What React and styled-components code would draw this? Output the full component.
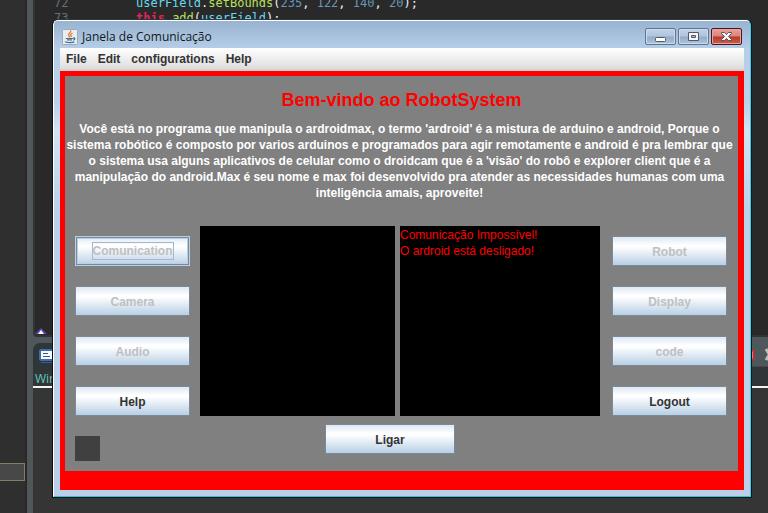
import React from "react";
import styled, { createGlobalStyle, css } from "styled-components";

const GlobalStyle = createGlobalStyle`
  *, *::before, *::after { box-sizing: border-box; }
  body { margin: 0; background: #353535; font-family: "Liberation Sans", Arial, sans-serif; }
  button { font: inherit; padding: 0; margin: 0; }
`;

const Desktop = styled.div`
  position: relative;
  display: flow-root;
  min-height: 100vh;
  overflow: hidden;
`;

/* ---------- editor behind the window ---------- */

const Ide = styled.div`
  position: absolute;
  inset: 0;
  display: flex;
  overflow: hidden;
`;

const Explorer = styled.aside`
  width: 27px;
  flex: none;
  padding-top: 463px;
  background: #2f2f2f;
  border-right: 2px solid #282828;
`;

const SelectedRow = styled.div`
  height: 18px;
  background: #484848;
  border: 1px solid #7f7f62;
  border-left: 0;
`;

const Sash = styled.div`
  width: 6px;
  flex: none;
  background: #50575b;
`;

const Workbench = styled.div`
  flex: 1;
  min-width: 0;
  display: flex;
  flex-direction: column;
  background: #50575b;
`;

const Editor = styled.div`
  height: 337px;
  flex: none;
  display: flex;
  flex-direction: column;
  justify-content: space-between;
  background: #292929;
  border-left: 2px solid #303437;
  border-bottom: 2px solid #303437;
  border-bottom-left-radius: 4px;
`;

const Code = styled.pre`
  margin: 0;
  margin-top: -4px;
  font: 12px/15px "DejaVu Sans Mono", monospace;
  color: #f0f0f0;
`;

const CodeLine = styled.div`
  white-space: pre;
`;

const LineNumber = styled.span`
  display: inline-block;
  width: 101px;
  padding-left: 19px;
  color: #64707a;
`;

const Token = styled.span`
  color: ${(p) => p.$color};
`;

const Marker = styled.svg`
  display: block;
  width: 12px;
  height: 7px;
`;

const ConsoleTabs = styled.div`
  height: 45px;
  flex: none;
  margin-top: 6px;
  display: flex;
  justify-content: space-between;
  background: #303538;
  border-top-left-radius: 7px;
  border-bottom: 2px solid #f4f4f4;
`;

const TabSide = styled.div`
  padding: 6px 0 0 2px;
`;

const TabIcon = styled.svg`
  display: block;
  width: 14px;
  height: 14px;
  margin-left: 4px;
`;

const ConsoleName = styled.div`
  font: 12px/16px "Open Sans", sans-serif;
  margin-top: 8px;
  color: #68c8bd;
`;

const ToolStrip = styled.div`
  width: 19px;
  height: 24px;
  background: #50575b;
  border-bottom: 1px solid #45484c;
`;

const ConsoleBody = styled.div`
  flex: 1;
  background: #353535;
`;

/* ---------- application window ---------- */

const Frame = styled.div`
  position: relative;
  margin: 19px 16px 15px 52px;
  border: 1px solid #101010;
  border-top-color: #30343a;
  border-radius: 6px 6px 0 0;
  background: #000000;
`;

const FrameInner = styled.div`
  padding: 0 6px 6px;
  border: 1px solid #ffffff;
  border-right-color: #27d3ef;
  border-bottom-color: #27c5dc;
  border-radius: 5px 5px 0 0;
  background: linear-gradient(#98b3d0 0, #b6cee8 28px, #b9d1ea 80px, #d3e3f3 110px, #b9d1ea 190px, #bad0ea 100%);
`;

const TitleBar = styled.header`
  height: 27px;
  display: flex;
  align-items: center;
  gap: 4px;
  padding: 4px 2px 0;
`;

const Title = styled.h1`
  flex: 1;
  margin: 0;
  font: 12px/16px "Open Sans", sans-serif;
  color: #101820;
`;

const JavaIcon = styled.svg`
  width: 16px;
  height: 16px;
  flex: none;
`;

const WindowButtons = styled.div`
  display: flex;
  gap: 2px;
`;

const WindowButton = styled.button`
  width: 31px;
  height: 17px;
  display: grid;
  place-items: center;
  border: 1px solid ${(p) => (p.$close ? "#4a1520" : "#63758c")};
  border-radius: 2px;
  box-shadow: inset 0 0 0 1px ${(p) => (p.$close ? "#e5a49c" : "#c9dbed")};
  background: ${(p) =>
    p.$close
      ? "linear-gradient(#e8a29a 0, #d98579 7px, #b83a24 8px, #c9604b 100%)"
      : "linear-gradient(#bfd1e6 0, #b0c5dd 7px, #94abc7 8px, #adc4dd 100%)"};
`;

const MenuBar = styled.nav`
  height: 23px;
  display: flex;
  align-items: center;
  gap: 11px;
  padding: 1px 6px 0;
  background: linear-gradient(#ffffff, #dddddd 21px);
  border-bottom: 2px solid #ced2d2;
`;

const MenuItem = styled.button`
  border: 0;
  background: none;
  font-size: 12px;
  line-height: 16px;
  font-weight: bold;
  color: #333333;
`;

const RedFrame = styled.main`
  padding: 5px 6px 19px 5px;
  background: #ff0000;
`;

const Panel = styled.div`
  background: #808080;
`;

const Welcome = styled.h2`
  margin: 0;
  padding-top: 13px;
  font-size: 18px;
  line-height: 22px;
  text-align: center;
  color: #ff0000;
`;

const Intro = styled.p`
  margin: 0;
  padding: 10px 4px 0 0;
  height: 115px;
  font-size: 12px;
  line-height: 16px;
  font-weight: bold;
  text-align: center;
  white-space: nowrap;
  color: #ffffff;
`;

const Workspace = styled.div`
  display: flex;
  padding: 0 11px 0 10px;
`;

const ButtonColumn = styled.div`
  width: 115px;
  flex: none;
  display: flex;
  flex-direction: column;
  gap: 20px;
  padding-top: 10px;
`;

const SteelButton = styled.button`
  height: 30px;
  width: ${(p) => (p.$wide ? "130px" : "100%")};
  padding-top: ${(p) => (p.$focused ? "0" : "2px")};
  border: 1px solid #7a8a99;
  background: linear-gradient(#dde8f3 0, #ffffff 30%, #ffffff 35%, #b8cfe5 100%);
  font-size: 12px;
  line-height: 16px;
  font-weight: bold;
  color: #333333;
  &:disabled { color: #c0c0c0; }
  ${(p) =>
    p.$focused &&
    css`
      border-color: #b8cfe5;
      box-shadow: inset 0 0 0 1px #7a8a99, inset 0 0 0 2px #b8cfe5;
    `}
`;

const FocusLabel = styled.span`
  display: inline-block;
  border: 1px solid #a3b8cc;
`;

const Screens = styled.div`
  flex: 1;
  display: grid;
  grid-template-columns: 195fr 200fr;
  gap: 5px;
  margin: 0 12px 0 10px;
`;

const Screen = styled.div`
  min-height: 190px;
  background: #000000;
  padding: 1px 0;
  font-size: 12px;
  line-height: 16px;
  color: #ff0000;
`;

const Footer = styled.footer`
  height: 55px;
  display: grid;
  grid-template-columns: 125px 1fr 135px;
  padding: 8px 11px 0 10px;
`;

const Lamp = styled.div`
  width: 25px;
  height: 25px;
  margin-top: 12px;
  background: #404040;
`;

const PowerSlot = styled.div`
  display: flex;
  justify-content: center;
  padding-right: 12px;
`;

const introLines = [
  "Você está no programa que manipula o ardroidmax, o termo 'ardroid' é a mistura de arduino e android, Porque o",
  "sistema robótico é composto por varios arduinos e programados para agir remotamente e android é pra lembrar que",
  "o sistema usa alguns aplicativos de celular como o droidcam que é a 'visão' do robô e explorer client que é a",
  "manipulação do android.Max é seu nome e max foi desenvolvido pra atender as necessidades humanas com uma",
  "inteligência amais, aproveite!",
];

const leftActions = [
  { label: "Comunication", disabled: true, focused: true },
  { label: "Camera", disabled: true },
  { label: "Audio", disabled: true },
  { label: "Help" },
];

const rightActions = [
  { label: "Robot", disabled: true },
  { label: "Display", disabled: true },
  { label: "code", disabled: true },
  { label: "Logout" },
];

function Actions({ items }) {
  return (
    <ButtonColumn>
      {items.map((a) => (
        <SteelButton key={a.label} type="button" disabled={a.disabled} $focused={a.focused}>
          {a.focused ? <FocusLabel>{a.label}</FocusLabel> : a.label}
        </SteelButton>
      ))}
    </ButtonColumn>
  );
}

function Background() {
  return (
    <Ide>
      <Explorer>
        <SelectedRow />
      </Explorer>
      <Sash />
      <Workbench>
        <Editor>
          <Code>
            <CodeLine>
              <LineNumber>72</LineNumber>
              <Token $color="#66d9ef">userField</Token>.
              <Token $color="#b9e05c">setBounds</Token>
              (<Token $color="#6897bb">235</Token>, <Token $color="#6897bb">122</Token>,{" "}
              <Token $color="#6897bb">140</Token>, <Token $color="#6897bb">20</Token>);
            </CodeLine>
            <CodeLine>
              <LineNumber>73</LineNumber>
              <Token $color="#e0245e"><b>this</b></Token>.
              <Token $color="#b9e05c">add</Token>
              (<Token $color="#66d9ef">userField</Token>);
            </CodeLine>
          </Code>
          <Marker viewBox="0 0 12 7">
            <path d="M0 6 6 0l6 6z" fill="#5c45b5" />
            <path d="M3 6l3-4 3 4z" fill="#fff" />
          </Marker>
        </Editor>
        <ConsoleTabs>
          <TabSide>
            <TabIcon viewBox="0 0 14 14">
              <rect x="1" y="1" width="13" height="10" rx="1" fill="#f5f9fd" stroke="#3f6cb0" strokeWidth="2" />
              <path d="M4 4.500h5M4 7.500h7" stroke="#39588c" />
              <path d="M2 13.500h11" stroke="#2c5fae" strokeWidth="1" />
            </TabIcon>
            <ConsoleName>Win</ConsoleName>
          </TabSide>
          <ToolStrip>
            <svg width="19" height="24" viewBox="0 0 19 24">
              <path d="M0 7.500h4.500v9H0" fill="#f6bcbc" stroke="#c72d35" strokeWidth="2" />
              <path d="M17 6l7 11M24 6l-7 11" stroke="#bdbdbd" strokeWidth="3" />
            </svg>
          </ToolStrip>
        </ConsoleTabs>
        <ConsoleBody />
      </Workbench>
    </Ide>
  );
}

export default function App() {
  return (
    <Desktop>
      <GlobalStyle />
      <Background />
      <Frame>
        <FrameInner>
          <TitleBar>
            <JavaIcon viewBox="0 0 16 16" aria-hidden="true">
              <rect x=".5" y=".5" width="15" height="15" rx="1" fill="#e9edf2" stroke="#9eacb9" />
              <path d="M8.500 1.500c1.500 2-3 3-1.800 5 .3.700.8 1.200 1 1.900M10.500 4c-2 1-2.300 2-1 4" fill="none" stroke="#e87722" strokeWidth="1.300" />
              <path d="M4 9c0 1 7 1 7 0M5 11h5M11 9c3-.5 2 2 0 2M3 12.700c1 1.200 8 1.200 9.500 0" fill="none" stroke="#456c90" strokeWidth="1.200" />
            </JavaIcon>
            <Title>Janela de Comunicação</Title>
            <WindowButtons>
              <WindowButton type="button" aria-label="Minimize">
                <svg width="11" height="11" viewBox="0 0 11 11">
                  <rect x=".5" y="6.500" width="10" height="4" rx="1" fill="#fff" stroke="#52586a" />
                </svg>
              </WindowButton>
              <WindowButton type="button" aria-label="Maximize">
                <svg width="11" height="9" viewBox="0 0 11 9">
                  <path fillRule="evenodd" d="M.5.5h10v8H.5zM3.500 3.500v2h4v-2z" fill="#f4f4f4" stroke="#52586a" />
                </svg>
              </WindowButton>
              <WindowButton type="button" aria-label="Close" $close>
                <svg width="11" height="9" viewBox="0 0 11 9">
                  <path d="M.5.5h3l2 2 2-2h3v1l-3 3 3 3v1h-3l-2-2-2 2h-3v-1l3-3-3-3z" fill="#f4f4f4" stroke="#555066" />
                </svg>
              </WindowButton>
            </WindowButtons>
          </TitleBar>
          <MenuBar>
            <MenuItem type="button">File</MenuItem>
            <MenuItem type="button">Edit</MenuItem>
            <MenuItem type="button">configurations</MenuItem>
            <MenuItem type="button">Help</MenuItem>
          </MenuBar>
          <RedFrame>
            <Panel>
              <Welcome>Bem-vindo ao RobotSystem</Welcome>
              <Intro>
                {introLines.map((line) => (
                  <React.Fragment key={line}>
                    {line}
                    <br />
                  </React.Fragment>
                ))}
              </Intro>
              <Workspace>
                <Actions items={leftActions} />
                <Screens>
                  <Screen />
                  <Screen>
                    Comunicação Impossível!
                    <br />O ardroid está desligado!
                  </Screen>
                </Screens>
                <Actions items={rightActions} />
              </Workspace>
              <Footer>
                <Lamp />
                <PowerSlot>
                  <SteelButton type="button" $wide>Ligar</SteelButton>
                </PowerSlot>
              </Footer>
            </Panel>
          </RedFrame>
        </FrameInner>
      </Frame>
    </Desktop>
  );
}
